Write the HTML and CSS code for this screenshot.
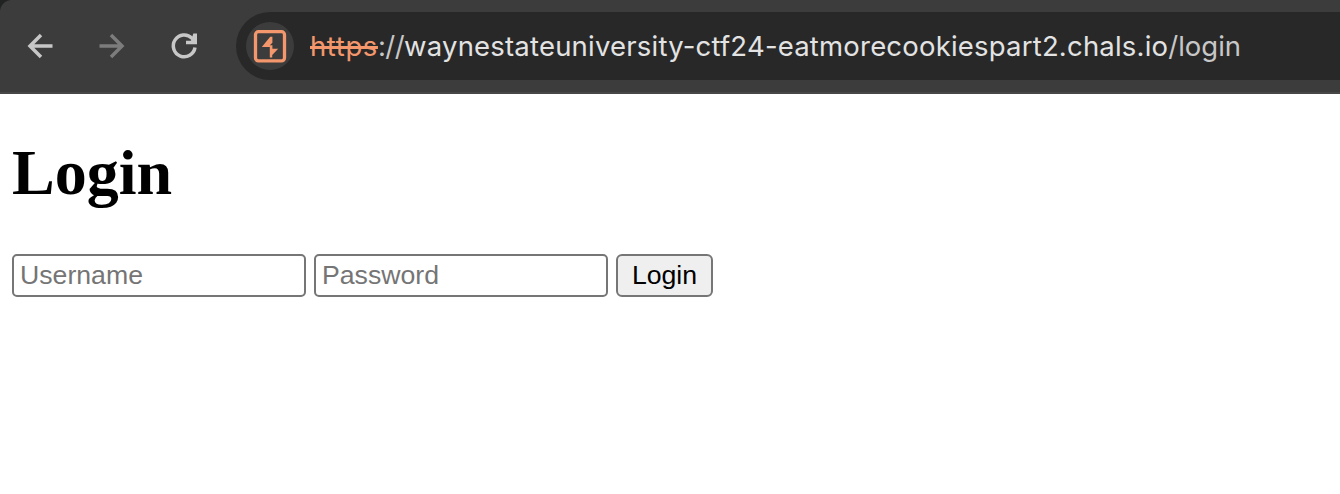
FILE: index.html
```html
<!DOCTYPE html>
<html lang="en">
<head>
<meta charset="utf-8">
<title>Login</title>
<link rel="stylesheet" href="styles.css">
</head>
<body>
<div class="frame">
<header class="toolbar">
  <nav class="nav">
    <svg class="icon" viewBox="0 0 32 32"><path d="M28.500 16H6.500M17 5 6 16l11 11"/></svg>
    <svg class="icon icon-off" viewBox="0 0 32 32"><path d="M3.500 16h22M15 5l11 11-11 11"/></svg>
    <svg class="icon" viewBox="0 0 32 32"><path d="M27 17.500a10.900 10.900 0 1 1-3-9.300L26.500 11"/><path class="solid" d="M25.300 3.500h3.700v10.800H18v-3.500h5z"/></svg>
  </nav>
  <div class="omnibox">
    <span class="badge">
      <svg viewBox="0 0 48 48"><rect x="9.500" y="9.700" width="29" height="29.200" rx="3"/><path d="M24.200 14.800h2.200v6l-2.600 2.500h2.600v3.400h5.800L26.200 33v2.500h-2.400v-10.500H15.800z"/></svg>
    </span>
    <div class="url"><span class="scheme">https</span><span class="sep">://</span><span class="host">waynestateuniversity-ctf24-eatmorecookiespart2.chals.io</span><span class="path">/login</span></div>
  </div>
</header>
<main class="page">
  <h1 class="title">Login</h1>
  <form class="form">
    <input class="field" type="text" placeholder="Username">
    <input class="field" type="password" placeholder="Password">
    <button class="submit" type="button">Login</button>
  </form>
</main>
</div>
</body>
</html>
```
FILE: styles.css
```css
body { margin: 0; background: #fff; }
.frame { height: 494px; overflow: hidden; background: #fff; }
.toolbar {
  box-sizing: border-box;
  height: 94px;
  display: flex;
  padding-top: 12px;
  border-bottom: 2px solid #474747;
  background: radial-gradient(circle at 12px 12px, #3c3c3c 11.500px, #202322 12.500px) 0 0 / 12px 12px no-repeat, #3c3c3c;
}
.nav {
  box-sizing: border-box;
  width: 236px;
  height: 68px;
  padding-left: 24px;
  display: flex;
  align-items: center;
  gap: 40px;
}
.icon { width: 32px; height: 32px; fill: none; stroke: #c7c7c7; stroke-width: 3.500; }
.icon-off { stroke: #7c7c7c; }
.icon .solid { fill: #c7c7c7; stroke: none; }
.omnibox {
  box-sizing: border-box;
  flex: 1;
  min-width: 0;
  height: 68px;
  padding-left: 10px;
  display: flex;
  align-items: center;
  border-radius: 34px 0 0 34px;
  background: #282828;
}
.badge { width: 48px; height: 48px; border-radius: 50%; background: #3c3c3c; }
.badge svg { display: block; width: 48px; height: 48px; }
.badge rect { fill: none; stroke: #f4976c; stroke-width: 3.300; }
.badge path { fill: #f4976c; }
.url {
  margin-left: 16px;
  display: flex;
  font: 27.500px/34px Inter, sans-serif;
  white-space: nowrap;
  color: #c7c7c7;
}
.scheme { color: #f4976c; text-decoration: line-through; text-decoration-thickness: 2.500px; letter-spacing: 0.600px; }
.sep { letter-spacing: -0.550px; }
.host { color: #e3e3e3; letter-spacing: 0.200px; }
.title {
  margin: 0;
  font: bold 64px/74px "Liberation Serif", serif;
  color: #000;
}
.page { padding: 42px 12px 0; }
.form { margin-top: 44px; display: flex; gap: 8px; }
.field, .submit {
  box-sizing: border-box;
  height: 43px;
  margin: 0;
  border: 2px solid #767676;
  font: 26.667px/30px "Liberation Sans", Arial, sans-serif;
}
.field { width: 294px; padding: 2px 6px; border-radius: 5px; background: #fff; }
.field::placeholder { color: #757575; opacity: 1; }
.submit { width: 97px; padding: 0 0 1px; border-radius: 6px; background: #efefef; color: #000; }
```
